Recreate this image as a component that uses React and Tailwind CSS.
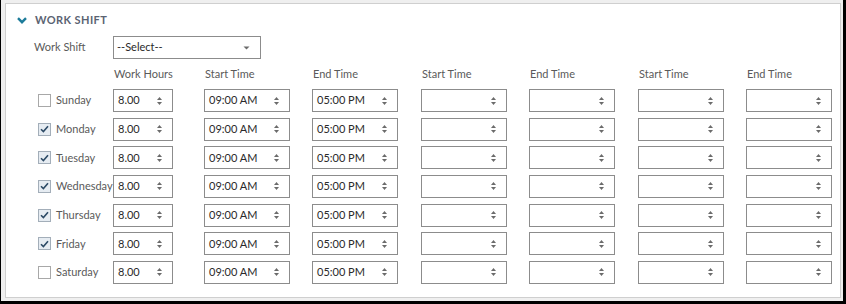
import React from "react";

const days = [
  { name: "Sunday", checked: false },
  { name: "Monday", checked: true },
  { name: "Tuesday", checked: true },
  { name: "Wednesday", checked: true },
  { name: "Thursday", checked: true },
  { name: "Friday", checked: true },
  { name: "Saturday", checked: false },
];

const headers = ["Work Hours", "Start Time", "End Time", "Start Time", "End Time", "Start Time", "End Time"];

const Spinner = () => (
  <svg width="7" height="10" viewBox="0 0 7 10" className="shrink-0">
    <path d="M3.5 1 L6 4 L1 4 Z" fill="#6b6b6b" />
    <path d="M3.5 9 L6 6 L1 6 Z" fill="#6b6b6b" />
  </svg>
);

const SpinBox = ({ value, width }) => (
  <div className={`flex items-center justify-between h-[23px] border border-[#8c8c8c] bg-white pl-[4px] pr-[9px] ${width}`}>
    <span className="text-[#2a2a2a]">{value}</span>
    <Spinner />
  </div>
);

const Checkbox = ({ checked }) => (
  <div
    className={`w-[13px] h-[13px] border flex items-center justify-center ${
      checked ? "border-[#a3aeb9] bg-[#e6ecf2]" : "border-[#a8a8a8] bg-white"
    }`}
  >
    {checked && (
      <svg width="9" height="8" viewBox="0 0 9 8">
        <path d="M1 4.2 L3.4 6.6 L8 1.2" fill="none" stroke="#2c4a66" strokeWidth="1.6" />
      </svg>
    )}
  </div>
);

export default function App() {
  return (
    <div
      className="w-[846px] h-[304px] bg-[#efefef] border-l border-r-[3px] border-b-[3px] border-black pt-[3px] pl-[4px] pr-[2px] pb-[3px] text-[11px] text-[#5a5a5a]"
      style={{ fontFamily: "Lato, 'Noto Sans', sans-serif" }}
    >
      <div className="h-full bg-white border border-[#cfcfcf] pl-[28px] pt-[9px]">
        <div className="flex items-center gap-[8px] h-[15px] -ml-[17px]">
          <svg width="10" height="7" viewBox="0 0 10 7">
            <path d="M1 1.2 L5 5.2 L9 1.2" fill="none" stroke="#1c7b9a" strokeWidth="2.4" />
          </svg>
          <span className="font-bold text-[#5b6372] tracking-[0.4px]">WORK SHIFT</span>
        </div>

        <div className="flex items-center mt-[8px] h-[23px]">
          <span className="w-[79px]">Work Shift</span>
          <div className="flex items-center justify-between w-[148px] h-[23px] border border-[#8c8c8c] pl-[3px] pr-[10px]">
            <span className="text-[#2a2a2a]">--Select--</span>
            <svg width="7" height="4" viewBox="0 0 7 4">
              <path d="M0.5 0.5 L6.5 0.5 L3.5 3.5 Z" fill="#6b6b6b" />
            </svg>
          </div>
        </div>

        <div className="grid grid-cols-[79px_91px_108px_109px_108px_109px_108px_86px] mt-[7px]">
          <div />
          {headers.map((h, i) => (
            <div key={i} className="h-[16px] leading-[16px] pl-[1px]">
              {h}
            </div>
          ))}
        </div>

        <div className="flex flex-col gap-y-[5.67px] mt-[7px]">
          {days.map((d) => (
            <div
              key={d.name}
              className="grid grid-cols-[79px_91px_108px_109px_108px_109px_108px_86px] items-center"
            >
              <div className="flex items-center gap-[5px] pl-[4px]">
                <Checkbox checked={d.checked} />
                <span>{d.name}</span>
              </div>
              <SpinBox value="8.00" width="w-[60px]" />
              <SpinBox value="09:00 AM" width="w-[86px]" />
              <SpinBox value="05:00 PM" width="w-[86px]" />
              <SpinBox value="" width="w-[86px]" />
              <SpinBox value="" width="w-[86px]" />
              <SpinBox value="" width="w-[86px]" />
              <SpinBox value="" width="w-[86px]" />
            </div>
          ))}
        </div>
      </div>
    </div>
  );
}
